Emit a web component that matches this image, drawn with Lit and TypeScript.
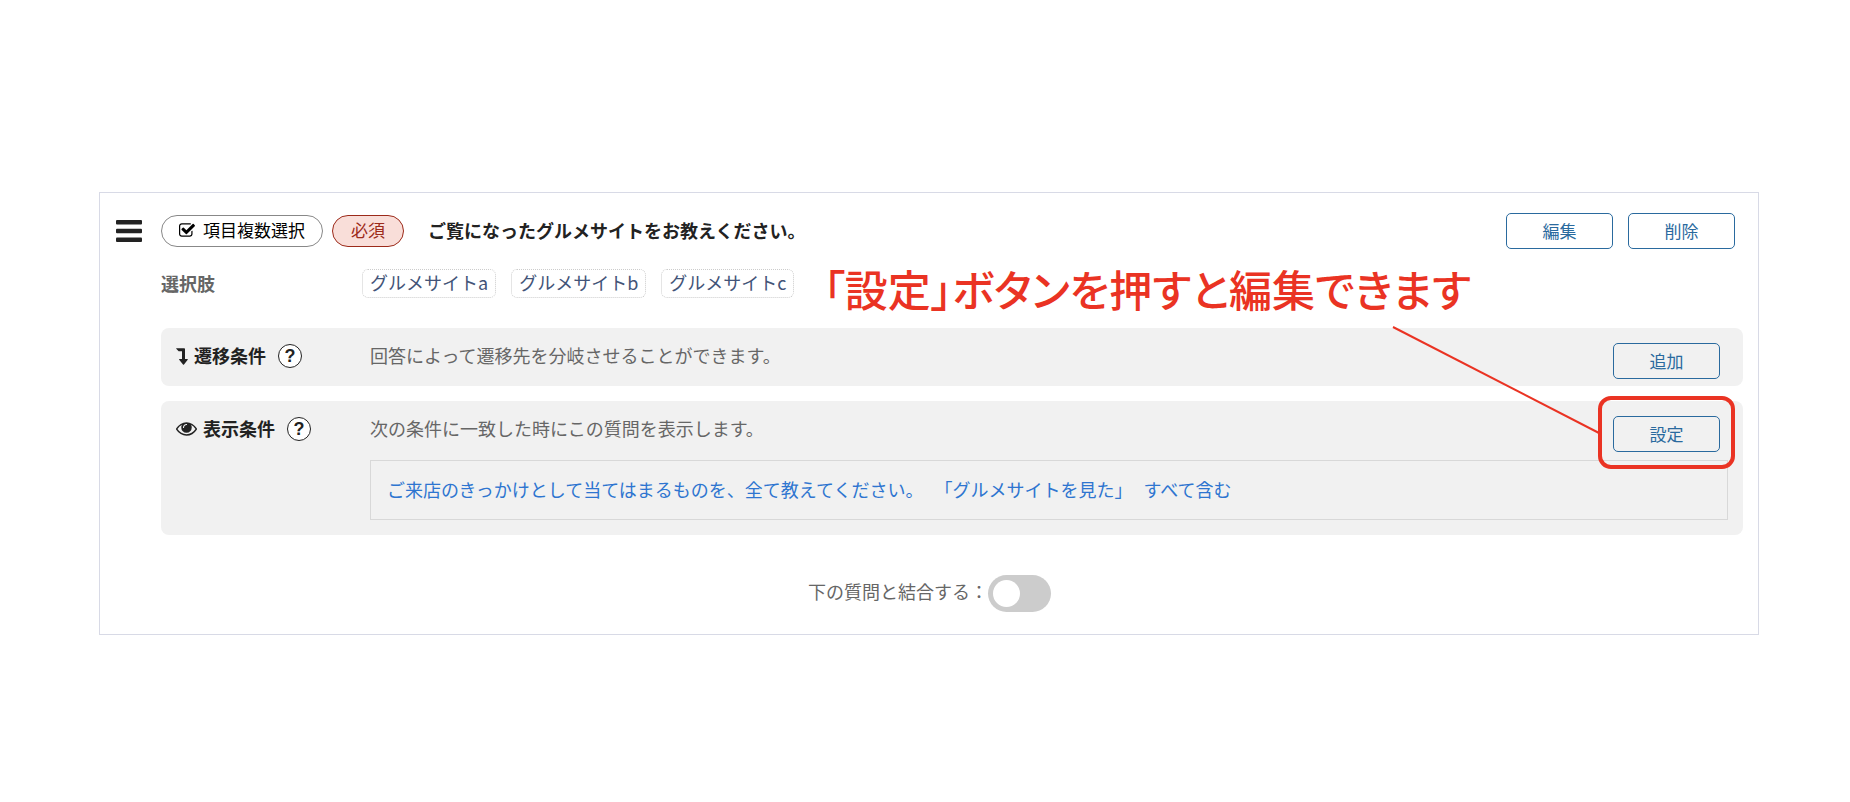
import { LitElement, html, css } from "lit";
import { customElement, property, state } from "lit/decorators.js";

const checkIcon = html`<svg class="check" viewBox="64 128 1664 1408" aria-hidden="true"><path fill="currentColor" d="M1472 930v318q0 119-84.5 203.5t-203.5 84.5h-832q-119 0-203.5-84.5t-84.5-203.5v-832q0-119 84.5-203.5t203.5-84.5h832q63 0 117 25 15 7 18 23 3 17-9 29l-49 49q-10 10-23 10-3 0-9-2-23-6-45-6h-832q-66 0-113 47t-47 113v832q0 66 47 113t113 47h832q66 0 113-47t47-113v-254q0-13 9-22l64-64q10-10 23-10 6 0 12 3 20 8 20 29zm231-489l-814 814q-24 24-57 24t-57-24l-430-430q-24-24-24-57t24-57l110-110q24-24 57-24t57 24l263 263 647-647q24-24 57-24t57 24l110 110q24 24 24 57t-24 57z"/></svg>`;

const branchIcon = html`<svg class="branch" viewBox="0 0 12 17" aria-hidden="true"><path fill="currentColor" d="M.4.2H8.2q.8 0 .8.8V11h2.4q.7.1.3.8L8 16.5q-.5.5-1 0L3.2 11.8q-.4-.7.3-.8H6V3.3H2.9q-.3 0-.5-.3L.2.7Q0 .3.4.2z"/></svg>`;

const eyeIcon = html`<svg class="eye" viewBox="0 384 1792 1152" aria-hidden="true"><path fill="currentColor" d="M1664 960q-152-236-381-353 61 104 61 225 0 185-131.5 316.5t-316.5 131.5-316.5-131.5-131.5-316.5q0-121 61-225-229 117-381 353 133 205 333.5 326.5t434.5 121.5 434.5-121.5 333.5-326.5zm-720-384q0-20-14-34t-34-14q-125 0-214.5 89.5t-89.5 214.5q0 20 14 34t34 14 34-14 14-34q0-86 61-147t147-61q20 0 34-14t14-34zm848 384q0 34-20 69-140 230-376.5 368.5t-499.5 138.5-499.5-139-376.5-368q-20-35-20-69t20-69q140-229 376.5-368t499.5-139 499.5 139 376.5 368q20 35 20 69z"/></svg>`;

const buttonStyles = css`
  button {
    font: inherit;
    color: inherit;
    margin: 0;
    padding: 0;
    border: 0;
    background: none;
    cursor: pointer;
  }
  .action {
    box-sizing: border-box;
    width: 107px;
    height: 36px;
    border: 1px solid #2a6a9e;
    border-radius: 5px;
    color: #2a6a9e;
    font-size: 17px;
    line-height: 26px;
  }
`;

@customElement("condition-panel")
class ConditionPanel extends LitElement {
  @property() heading = "";
  @property() description = "";
  @property() action = "";
  @property({ attribute: false }) icon: unknown = null;

  static styles = [
    buttonStyles,
    css`
      :host {
        display: grid;
        grid-template-columns: 194px 1fr;
        padding: 15px 15px 7px;
        border-radius: 8px;
        background: #f1f1f1;
      }
      :host([detailed]) {
        padding-bottom: 15px;
      }
      .name {
        display: flex;
        align-items: center;
        gap: 6px;
        height: 26px;
        color: #222;
        font-weight: 700;
      }
      .name h3 {
        margin: 0 6px 0 0;
        font-size: inherit;
        line-height: 24px;
        padding-bottom: 2px;
      }
      .help {
        box-sizing: border-box;
        width: 24px;
        height: 24px;
        border: 1px solid #222;
        border-radius: 50%;
        background: #fff;
        font-family: "Liberation Sans", sans-serif;
        font-weight: 700;
        line-height: 22px;
      }
      .branch {
        width: 12px;
        height: 17px;
      }
      .eye {
        width: 21px;
        height: 14px;
      }
      .top {
        display: flex;
        justify-content: space-between;
        padding-right: 8px;
      }
      .top p {
        margin: 0;
        color: #666;
        line-height: 24px;
      }
      .button-area {
        position: relative;
        height: 36px;
      }
    `,
  ];

  render() {
    return html`
      <div class="name">
        ${this.icon}
        <h3>${this.heading}</h3>
        <button class="help" aria-label="${this.heading}">?</button>
      </div>
      <div>
        <div class="top">
          <p>${this.description}</p>
          <div class="button-area">
            <button class="action">${this.action}</button>
            <slot name="note"></slot>
          </div>
        </div>
        <slot></slot>
      </div>
    `;
  }
}

@customElement("app-root")
class AppRoot extends LitElement {
  @state() private joined = false;

  private choices = ["グルメサイトa", "グルメサイトb", "グルメサイトc"];

  static styles = [
    buttonStyles,
    css`
      :host {
        display: block;
        box-sizing: border-box;
        min-height: 100vh;
        padding: 192px 91px 80px 99px;
        background: #fff;
        color: #222;
        font-family: "Noto Sans CJK JP", sans-serif;
        font-size: 18px;
        line-height: 26px;
      }
      .card {
        display: grid;
        grid-template-columns: 26px 1fr;
        column-gap: 19px;
        padding: 20px 15px 22px 16px;
        border: 1px solid #d8dae6;
      }
      .menu {
        display: flex;
        align-items: center;
        height: 36px;
      }
      .menu svg {
        width: 26px;
        height: 22px;
      }
      header {
        display: flex;
        align-items: center;
        gap: 15px;
        padding-right: 8px;
      }
      .tags {
        display: flex;
        gap: 9px;
      }
      .tag {
        display: flex;
        align-items: center;
        gap: 8px;
        box-sizing: border-box;
        height: 32px;
        padding: 0 17px 2px;
        border: 1px solid #888;
        border-radius: 16px;
        color: #000;
        font-size: 17px;
      }
      .required {
        padding: 0 18px 2px;
        border-color: #9c2a1a;
        background: #f9ded9;
        color: #9c2a1a;
      }
      .check {
        width: 16px;
        height: 14px;
      }
      h2 {
        flex: 1;
        margin: 0 0 0 9px;
        padding-bottom: 2px;
        font-size: 18px;
        font-weight: 700;
      }
      .choices {
        display: grid;
        grid-template-columns: 201px 1fr;
        align-items: center;
        margin: 20px 0 30px;
      }
      .choices h3 {
        margin: 0;
        padding-bottom: 2px;
        color: #666;
        font-size: 18px;
      }
      ul {
        display: flex;
        gap: 15px;
        margin: 0;
        padding: 0;
        list-style: none;
      }
      li {
        box-sizing: border-box;
        height: 29px;
        padding: 0 7px;
        border: 1px dotted #ccc;
        border-radius: 6px;
        color: #435478;
        line-height: 24px;
      }
      .panels {
        display: grid;
        gap: 15px;
      }
      .rule {
        display: flex;
        gap: 11px;
        margin-top: 8px;
        padding: 15px 16px 17px;
        border: 1px solid #d8d8d8;
        color: #2e75d0;
        text-decoration: none;
      }
      .join {
        grid-column: 1 / -1;
        display: flex;
        justify-content: center;
        align-items: center;
        margin-top: 40px;
        color: #666;
      }
      .join label {
        padding-bottom: 6px;
      }
      .switch {
        appearance: none;
        box-sizing: border-box;
        display: flex;
        width: 63px;
        height: 37px;
        margin: 0;
        padding: 5px;
        border-radius: 19px;
        background: #ccc;
        cursor: pointer;
      }
      .switch::before {
        content: "";
        width: 27px;
        height: 27px;
        border-radius: 50%;
        background: #fff;
      }
      .switch:checked {
        justify-content: flex-end;
        background: #2a6a9e;
      }
      /* The callout is tied to the button that it explains. */
      .frame {
        position: absolute;
        inset: -20px -15px -17px;
        border: 4px solid #ea3323;
        border-radius: 13px;
        pointer-events: none;
      }
      .pointer {
        position: absolute;
        right: 120px;
        bottom: 18px;
        width: 208px;
        height: 108px;
        pointer-events: none;
      }
      .caption {
        position: absolute;
        right: 249px;
        bottom: 134px;
        color: #ea3323;
        font-size: 43px;
        font-weight: 500;
        line-height: 60px;
        font-feature-settings: "palt";
        white-space: nowrap;
      }
    `,
  ];

  private toggleJoin(event: Event) {
    this.joined = (event.target as HTMLInputElement).checked;
  }

  render() {
    return html`
      <article class="card">
        <button class="menu" aria-label="メニュー">
          <svg viewBox="0 0 26 22" aria-hidden="true">
            <g fill="#222">
              <rect y="0" width="26" height="4.5" rx="1" />
              <rect y="8.7" width="26" height="4.5" rx="1" />
              <rect y="17.4" width="26" height="4.5" rx="1" />
            </g>
          </svg>
        </button>
        <div>
          <header>
            <div class="tags">
              <span class="tag">${checkIcon}項目複数選択</span>
              <span class="tag required">必須</span>
            </div>
            <h2>ご覧になったグルメサイトをお教えください。</h2>
            <button class="action">編集</button>
            <button class="action">削除</button>
          </header>
          <section class="choices">
            <h3>選択肢</h3>
            <ul>
              ${this.choices.map((choice) => html`<li>${choice}</li>`)}
            </ul>
          </section>
          <div class="panels">
            <condition-panel
              heading="遷移条件"
              description="回答によって遷移先を分岐させることができます。"
              action="追加"
              .icon=${branchIcon}
            ></condition-panel>
            <condition-panel
              detailed
              heading="表示条件"
              description="次の条件に一致した時にこの質問を表示します。"
              action="設定"
              .icon=${eyeIcon}
            >
              <div slot="note">
                <div class="frame"></div>
                <svg class="pointer" viewBox="0 0 208 108" aria-hidden="true">
                  <path d="M1 1L207 107" stroke="#ea3323" stroke-width="2" />
                </svg>
                <div class="caption">「設定」ボタンを押すと編集できます</div>
              </div>
              <a class="rule" href="#">
                <span>ご来店のきっかけとして当てはまるものを、全て教えてください。</span>
                <span>「グルメサイトを見た」</span>
                <span>すべて含む</span>
              </a>
            </condition-panel>
          </div>
        </div>
        <div class="join">
          <label for="join">下の質問と結合する：</label>
          <input
            id="join"
            class="switch"
            type="checkbox"
            role="switch"
            .checked=${this.joined}
            @change=${this.toggleJoin}
          />
        </div>
      </article>
    `;
  }
}
